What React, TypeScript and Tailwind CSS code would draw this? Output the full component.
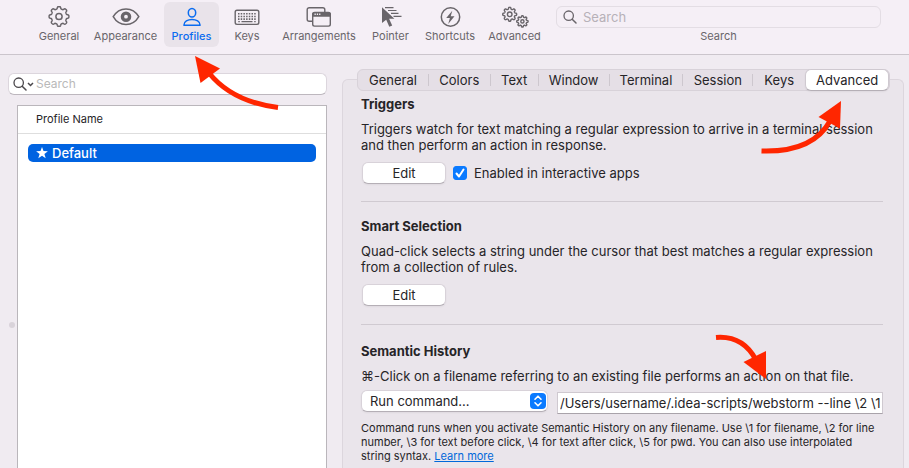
import React from "react";

function gearPath(cx: number, cy: number, radius: number, depth: number, teeth: number) {
  const points: string[] = [];
  const steps = teeth * 20;
  for (let i = 0; i < steps; i++) {
    const angle = (i / steps) * Math.PI * 2 - Math.PI / 2;
    const wave = Math.tanh(2.2 * Math.cos(teeth * (angle + Math.PI / 2)));
    const r = radius - depth / 2 + (wave * depth) / 2;
    points.push(`${(cx + r * Math.cos(angle)).toFixed(2)} ${(cy + r * Math.sin(angle)).toFixed(2)}`);
  }
  return `M${points.join("L")}Z`;
}

function GeneralIcon() {
  return (
    <svg className="h-6 w-7" viewBox="0 0 28 24" fill="none" stroke="currentColor" strokeWidth="1.5" strokeLinejoin="round">
      <path d={gearPath(14, 11.5, 9.9, 2.2, 8)} />
      <circle cx="14" cy="11.5" r="3.1" />
    </svg>
  );
}

function AppearanceIcon() {
  return (
    <svg className="h-6 w-7" viewBox="0 0 28 24" fill="none" stroke="currentColor" strokeWidth="1.5">
      <path d="M1.2 11.7C4 6.9 8.7 3.9 14 3.9s10 3 12.8 7.8C24 16.500 19.300 19.500 14 19.500S4 16.500 1.200 11.700Z" />
      <circle cx="14" cy="11.700" r="3.600" strokeWidth="3.400" />
    </svg>
  );
}

function ProfilesIcon() {
  return (
    <svg className="h-6 w-7" viewBox="0 0 28 24" fill="none" stroke="currentColor" strokeWidth="1.500">
      <ellipse cx="14" cy="7.700" rx="3.700" ry="4.300" />
      <path d="M5.900 20.200c-.1-4 4-5.800 8.100-5.800s8.200 1.800 8.100 5.800Z" strokeLinejoin="round" />
    </svg>
  );
}

function KeysIcon() {
  return (
    <svg className="h-6 w-7" viewBox="0 0 28 24" fill="none" stroke="currentColor" strokeWidth="1.400">
      <rect x="2.200" y="5.200" width="23.600" height="14.200" rx="1.800" />
      <path d="M5 8.700h18.500M5 11.500h18.500M5 14.100h18.500" strokeWidth="1.600" strokeDasharray="1.500 1.200" />
      <path d="M5.300 16.600h1.500M8.500 16.600h11M21.200 16.600h1.500" />
    </svg>
  );
}

function ArrangementsIcon() {
  return (
    <svg className="h-6 w-7" viewBox="0 0 28 24" fill="none" stroke="currentColor" strokeWidth="1.400">
      <path d="M7 16.300H4.200a2 2 0 0 1-2-2V4.700a2 2 0 0 1 2-2h13.600a2 2 0 0 1 2 2V7" />
      <rect x="7.700" y="7.700" width="17.600" height="13.400" rx="1.800" />
      <path d="M7.700 9.500a2 2 0 0 1 2-2h13.600a2 2 0 0 1 2 2v1.500H7.700Z" fill="currentColor" />
      <path d="M9.500 9.200h6" stroke="#f5eff6" strokeDasharray="1.300 1" />
    </svg>
  );
}

function PointerIcon() {
  return (
    <svg className="h-6 w-7" viewBox="0 0 28 24" fill="none" stroke="currentColor" strokeWidth="1.200">
      <path d="M8 2.700h8.500M11 5.500h8.500M14 8.400h7.500M16.500 11.300h8" />
      <path d="M5 2.200v15.800l4.200-3.300 3.100 7.100 2.900-1.300-3.100-6.700h5.300Z" fill="currentColor" stroke="none" />
    </svg>
  );
}

function ShortcutsIcon() {
  return (
    <svg className="h-6 w-7" viewBox="0 0 28 24" fill="none" stroke="currentColor" strokeWidth="1.500">
      <circle cx="14.500" cy="12" r="9.200" />
      <path d="M16.300 5.700 10.200 13.100h3.700l-1.700 5.800 6.300-7.700h-3.800Z" fill="currentColor" stroke="none" />
    </svg>
  );
}

function AdvancedIcon() {
  return (
    <svg className="h-6 w-7" viewBox="0 0 28 24" fill="none" stroke="currentColor" strokeWidth="1.400" strokeLinejoin="round">
      <path d={gearPath(8.7, 9.3, 7, 1.8, 8)} />
      <circle cx="8.700" cy="9.300" r="2.300" />
      <path d={gearPath(21.4, 16.4, 5.7, 1.5, 8)} />
      <circle cx="21.400" cy="16.400" r="1.600" />
    </svg>
  );
}

function SearchIcon({ className }: { className: string }) {
  return (
    <svg className={className} viewBox="0 0 14 14" fill="none" stroke="currentColor" strokeLinecap="round">
      <circle cx="5.700" cy="5.700" r="4.700" strokeWidth="1.300" />
      <path d="m9.200 9.200 3.800 3.800" strokeWidth="1.500" />
    </svg>
  );
}

const toolbarItems = [
  { label: "General", Icon: GeneralIcon },
  { label: "Appearance", Icon: AppearanceIcon },
  { label: "Profiles", Icon: ProfilesIcon },
  { label: "Keys", Icon: KeysIcon },
  { label: "Arrangements", Icon: ArrangementsIcon },
  { label: "Pointer", Icon: PointerIcon },
  { label: "Shortcuts", Icon: ShortcutsIcon },
  { label: "Advanced", Icon: AdvancedIcon },
];

const tabs = ["General", "Colors", "Text", "Window", "Terminal", "Session", "Keys", "Advanced"];

function Toolbar() {
  return (
    <header className="flex h-[55px] shrink-0 items-start border-b border-[#cbc5cc] bg-[#f5eff6] pt-0.5 pr-7 pl-[31px] text-[11px] leading-[14px] text-[#69656a]">
      <nav className="mr-[9px] grid shrink-0 grid-cols-[56px_77px_55px_56px_88px_55px_64px_65px]">
        {toolbarItems.map(({ label, Icon }) => (
          <button
            key={label}
            type="button"
            className={
              label === "Profiles"
                ? "flex h-[45px] flex-col items-center rounded-md bg-[#e9e3ea] pt-[3px] font-medium text-[#0a6cf0]"
                : "flex h-[45px] flex-col items-center pt-[3px]"
            }
          >
            <Icon />
            <span>{label}</span>
          </button>
        ))}
      </nav>
      <div className="flex min-w-0 flex-1 flex-col items-center gap-px pt-1">
        <div className="flex h-[22px] w-full items-center gap-1.5 rounded-md border border-[#e3dde4] px-1.5">
          <SearchIcon className="size-3.5 shrink-0" />
          <input
            id="toolbar-search"
            type="text"
            placeholder="Search"
            className="min-w-0 flex-1 bg-transparent text-[13px] leading-4 outline-none placeholder:text-[#b7b1b8]"
          />
        </div>
        <label htmlFor="toolbar-search">Search</label>
      </div>
    </header>
  );
}

function Sidebar() {
  return (
    <aside className="flex w-[327px] shrink-0 flex-col pt-[18px]">
      <div className="ml-2 flex h-[22px] items-center rounded-md border border-[#dcd6dd] border-b-[#bdb7be] bg-white pl-1 text-[#4a474b]">
        <SearchIcon className="size-3.5 shrink-0" />
        <svg className="h-2 w-[7px] shrink-0" viewBox="0 0 7 8" fill="none" stroke="currentColor" strokeWidth="1.500">
          <path d="m1 3 2.500 2.500L6 3" />
        </svg>
        <input
          type="text"
          aria-label="Search profiles"
          placeholder="Search"
          className="min-w-0 flex-1 bg-transparent pl-0.5 text-[12px] leading-4 outline-none placeholder:text-[#b9b9b9]"
        />
      </div>
      <div className="mt-2.5 flex flex-1">
        <div className="w-[17px] shrink-0 pt-[217px] pl-[9px]">
          <div className="size-1.5 rounded-full bg-[#d9d3da]" />
        </div>
        <div className="min-w-0 flex-1 border border-b-0 border-[#bab6bb] bg-white">
          <table className="w-full border-collapse text-left">
            <thead>
              <tr className="h-[27px] border-b border-[#dedede]">
                <th className="pl-[18px] text-[11px] leading-[14px] font-normal">Profile Name</th>
              </tr>
            </thead>
            <tbody>
              <tr>
                <td className="px-2.5 pt-[10px]">
                  <div className="flex h-[18px] items-center gap-1 rounded-[5px] bg-[#0063e1] pl-2 text-[13px] leading-4 font-medium text-white">
                    <svg className="size-3" viewBox="0 0 12 12" fill="currentColor">
                      <path d="m6 0 1.500 4.100 4.400.1-3.500 2.700 1.300 4.300L6 8.700l-3.700 2.500 1.300-4.300L.1 4.200l4.400-.1Z" />
                    </svg>
                    Default
                  </div>
                </td>
              </tr>
            </tbody>
          </table>
        </div>
      </div>
    </aside>
  );
}

function Tabs() {
  return (
    <div
      role="tablist"
      className="mr-[13px] ml-3.5 -mt-[11px] grid h-[22px] grid-cols-[71fr_62fr_48fr_71fr_74fr_70fr_52fr_84fr] rounded-md border border-[#d8d2d9] bg-[#e5dfe6]"
    >
      {tabs.map((tab, index) => (
        <button
          key={tab}
          type="button"
          role="tab"
          aria-selected={tab === "Advanced"}
          className={
            tab === "Advanced"
              ? "-my-px rounded-md border border-[#cfc9d0] border-b-[#b5afb6] bg-white shadow-xs"
              : "flex items-center"
          }
        >
          <span className="flex-1">{tab}</span>
          {index < 6 && <span className="h-3 w-px bg-[#cdc7ce]" />}
        </button>
      ))}
    </div>
  );
}

function EditButton() {
  return (
    <button
      type="button"
      className="ml-px h-[22px] w-[84px] rounded-md border border-[#d8d2d9] border-b-[#b5afb6] bg-white shadow-xs"
    >
      Edit
    </button>
  );
}

function Settings() {
  return (
    <main className="mt-6 mr-[5px] ml-[15px] min-w-0 flex-1 rounded-t-md border border-b-0 border-[#dcd6dd] bg-[#eae5eb]">
      <Tabs />
      <div className="mr-5 ml-[18px]">
        <section className="border-b border-[#d0cad1] pt-[5px] pb-[17px]">
          <h2 className="font-bold">Triggers</h2>
          <p className="mt-[9px] whitespace-nowrap">
            Triggers watch for text matching a regular expression to arrive in a terminal session
            <br />
            and then perform an action in response.
          </p>
          <div className="mt-[9px] flex items-center gap-[7px]">
            <EditButton />
            <span className="relative size-3.5">
              <input
                id="interactive"
                type="checkbox"
                defaultChecked
                className="peer block size-3.5 appearance-none rounded-[3px] border border-[#bdb7be] bg-white checked:border-[#0a7aff] checked:bg-[#0a7aff]"
              />
              <svg
                className="pointer-events-none absolute inset-0 hidden size-3.5 peer-checked:block"
                viewBox="0 0 14 14"
                fill="none"
                stroke="white"
                strokeWidth="2"
                strokeLinecap="round"
                strokeLinejoin="round"
              >
                <path d="m3.500 7.500 2.500 3 4.500-7" />
              </svg>
            </span>
            <label htmlFor="interactive">Enabled in interactive apps</label>
          </div>
        </section>
        <section className="border-b border-[#d0cad1] pt-4 pb-[18px]">
          <h2 className="font-bold">Smart Selection</h2>
          <p className="mt-[9px] mb-[9px] whitespace-nowrap">
            Quad-click selects a string under the cursor that best matches a regular expression
            <br />
            from a collection of rules.
          </p>
          <EditButton />
        </section>
        <section className="pt-[18px]">
          <h2 className="font-bold">Semantic History</h2>
          <p className="mt-[9px] whitespace-nowrap">
            ⌘-Click on a filename referring to an existing file performs an action on that file.
          </p>
          <div className="mt-1.5 flex gap-[9px]">
            <div className="relative h-[22px] w-[187px] shrink-0">
              <select
                aria-label="Action"
                className="h-full w-full appearance-none rounded-md border border-[#d8d2d9] border-b-[#b5afb6] bg-white pl-2 shadow-xs"
              >
                <option>Run command...</option>
              </select>
              <svg className="pointer-events-none absolute top-[3px] right-0.5 size-4" viewBox="0 0 16 16" fill="none">
                <rect width="16" height="16" rx="4" fill="#0a7aff" />
                <path d="m5 6.200 3-3 3 3M5 9.800l3 3 3-3" stroke="white" strokeWidth="1.600" strokeLinecap="round" strokeLinejoin="round" />
              </svg>
            </div>
            <input
              type="text"
              aria-label="Command"
              defaultValue="/Users/username/.idea-scripts/webstorm --line \2 \1"
              className="mt-0.5 h-[22px] min-w-0 flex-1 border border-[#cfc9d0] border-b-[#a9a3aa] bg-white px-0.5 outline-none"
            />
          </div>
          <p className="mt-[7px] text-[11px] leading-[14px] whitespace-nowrap">
            Command runs when you activate Semantic History on any filename. Use \1 for filename, \2 for line
            <br />
            number, \3 for text before click, \4 for text after click, \5 for pwd. You can also use interpolated
            <br />
            string syntax.{" "}
            <a href="#learn-more" className="text-[#0068da] underline">
              Learn more
            </a>
          </p>
        </section>
      </div>
    </main>
  );
}

function Arrows() {
  return (
    <svg
      className="pointer-events-none absolute top-0 left-0 h-[468px] w-[909px]"
      viewBox="0 0 909 468"
      fill="none"
      stroke="#ff2600"
      strokeWidth="5"
      aria-hidden="true"
    >
      <path d="M278 107.500C250 104 226 94 209 73" />
      <path d="m195 56 25 12.500-19.500 14.500Z" fill="#ff2600" stroke="none" />
      <path d="M761.500 151C794 152 818 143 830 121" />
      <path d="m841 101-22.500 16 21.500 11.500Z" fill="#ff2600" stroke="none" />
      <path d="M716 337.500C734 336 747 343 756 360" />
      <path d="m766 379-22.500-17 22.500-11Z" fill="#ff2600" stroke="none" />
    </svg>
  );
}

export default function App() {
  return (
    <div className="relative flex h-screen flex-col overflow-hidden bg-[#f0ebf1] font-[Inter,'DejaVu_Sans',sans-serif] text-[13px] leading-4 text-[#262427]">
      <Toolbar />
      <div className="flex min-h-0 flex-1">
        <Sidebar />
        <Settings />
      </div>
      <Arrows />
    </div>
  );
}
